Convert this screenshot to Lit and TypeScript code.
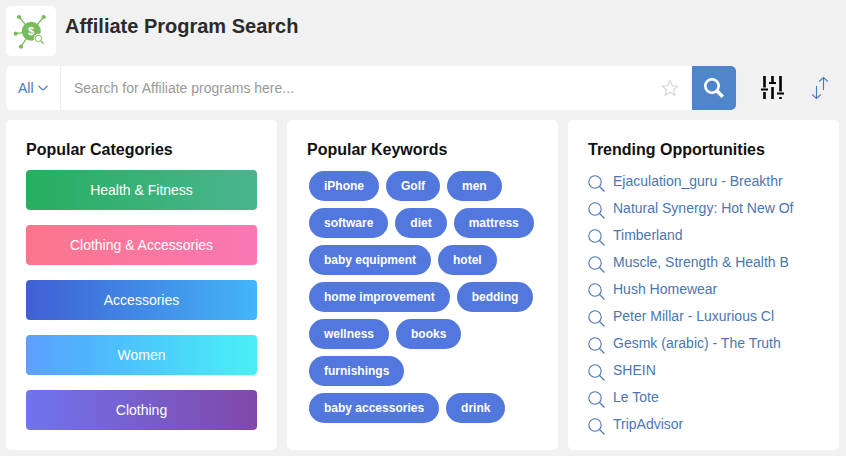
import { LitElement, html, css } from "lit";
import { customElement, property } from "lit/decorators.js";

const base = css`
  *,
  *::before,
  *::after {
    box-sizing: border-box;
  }
  button,
  input,
  select {
    font: inherit;
    border: 0;
    margin: 0;
    padding: 0;
    background: none;
  }
  button {
    cursor: pointer;
  }
  a {
    text-decoration: none;
  }
  svg {
    display: block;
  }
  ul {
    list-style: none;
    margin: 0;
    padding: 0;
  }
`;

@customElement("search-bar")
export class SearchBar extends LitElement {
  static styles = [
    base,
    css`
      :host {
        display: block;
      }
      .row {
        display: flex;
        align-items: center;
        height: 44px;
        padding-right: 10px;
      }
      .box {
        flex: 0 1 730px;
        min-width: 0;
        display: flex;
        align-items: stretch;
        height: 44px;
        border-radius: 5px;
        overflow: hidden;
        background: #fff;
      }
      .scope {
        display: grid;
        align-items: center;
        width: 55px;
        padding: 0 12px;
        border-right: 1px solid #eee;
        color: #4b7ab8;
      }
      .scope select {
        grid-area: 1 / 1;
        width: 30px;
        height: 44px;
        appearance: none;
        color: inherit;
        font-size: 14px;
        cursor: pointer;
      }
      .scope svg {
        grid-area: 1 / 1;
        justify-self: end;
        pointer-events: none;
      }
      .query {
        flex: 1;
        min-width: 0;
        padding: 0 13px;
        font-size: 14px;
        color: #333;
      }
      .query::placeholder {
        color: #999;
        opacity: 1;
      }
      .star {
        width: 44px;
        display: grid;
        place-items: center;
      }
      .go {
        width: 44px;
        display: grid;
        place-items: center;
        background: #4f86c9;
      }
      .tools {
        flex: 1 0 auto;
        display: flex;
        align-items: center;
        justify-content: space-between;
        padding-left: 24px;
      }
    `,
  ];

  render() {
    return html`
      <form class="row" @submit=${(e: Event) => e.preventDefault()}>
        <div class="box">
          <div class="scope">
            <select aria-label="Search scope">
              <option>All</option>
            </select>
            <svg width="10" height="6" viewBox="0 0 10 6" fill="none" stroke="currentColor" stroke-width="1.2">
              <path d="M.5 .7C2 2 3.5 4.8 5 4.8S8 2 9.500 .7" />
            </svg>
          </div>
          <input class="query" type="search" aria-label="Search for Affiliate programs" placeholder="Search for Affiliate programs here..." />
          <button class="star" type="button" aria-label="Favourites">
            <svg width="18" height="18" viewBox="0 0 18 18" fill="none" stroke="#d8d8d8" stroke-width="1.2" stroke-linejoin="round">
              <path d="M9 1.2 11.2 6.600 17 7l-4.500 3.700L14 16.500 9 13.300 4 16.500l1.500-5.800L1 7l5.800-.4Z" />
            </svg>
          </button>
          <button class="go" type="submit" aria-label="Search">
            <svg width="20" height="20" viewBox="0 0 20 20" fill="none" stroke="#fff">
              <circle cx="8" cy="8" r="6.700" stroke-width="2.600" />
              <path d="m12.800 12.800 6 6" stroke-width="3.600" />
            </svg>
          </button>
        </div>
        <div class="tools">
          <button type="button" aria-label="Filters">
            <svg width="24" height="24" viewBox="0 0 24 24" fill="none" stroke="#000">
              <path d="M4.500 0v11.500M4.500 16v7M12.500 0v6M12.500 11v12M20.500 0v15.500M20.500 21v2" stroke-width="2.600" />
              <path d="M1 13.500h7M9 7h7M17 17.500h7" stroke-width="2" />
            </svg>
          </button>
          <button type="button" aria-label="Sort">
            <svg width="18" height="24" viewBox="0 0 18 24" fill="none" stroke="#4b7ab8" stroke-width="1.100">
              <path d="M5.500 10v12.500M1.200 18.500l4.300 4 4.300-4M12.500 14V1.500M8.200 5.500l4.300-4 4.300 4" />
            </svg>
          </button>
        </div>
      </form>
    `;
  }
}

@customElement("panel-card")
export class PanelCard extends LitElement {
  @property() heading = "";

  static styles = [
    base,
    css`
      :host {
        display: block;
        min-width: 0;
      }
      .card {
        height: 100%;
        padding: 20px 20px 10px;
        border-radius: 5px;
        background: #fff;
      }
      .heading {
        margin: 0;
        font-size: 16px;
        line-height: 20px;
        font-weight: 700;
        color: #111;
      }
    `,
  ];

  render() {
    return html`
      <section class="card">
        <h2 class="heading">${this.heading}</h2>
        <slot></slot>
      </section>
    `;
  }
}

@customElement("app-root")
export class AppRoot extends LitElement {
  static styles = [
    base,
    css`
      :host {
        display: block;
        min-height: 100vh;
        box-sizing: border-box;
        padding: 6px 7px 6px 6px;
        background: #f1f1f1;
        font-family: "Liberation Sans", Arial, sans-serif;
        font-size: 14px;
      }
      .header {
        display: flex;
        align-items: flex-start;
        gap: 9px;
        margin-bottom: 10px;
      }
      .logo {
        width: 50px;
        height: 50px;
        border-radius: 5px;
        background: #fff;
      }
      .title {
        margin: 0;
        font-size: 20px;
        line-height: 40px;
        font-weight: 700;
        color: #2b2b2b;
      }
      .panels {
        display: grid;
        grid-template-columns: repeat(3, minmax(0, 1fr));
        gap: 10px;
        margin-top: 10px;
      }
      .categories {
        display: grid;
        gap: 15px;
        padding: 10px 0;
      }
      .category {
        display: block;
        border-radius: 4px;
        line-height: 40px;
        text-align: center;
        color: #fff;
      }
      .green {
        background: linear-gradient(90deg, #27ae60, #4ab58e);
      }
      .pink {
        background: linear-gradient(90deg, #fb758a, #fa78b4);
      }
      .blue {
        background: linear-gradient(90deg, #405fd3, #43b5f8);
      }
      .cyan {
        background: linear-gradient(90deg, #5f9ffc, #4fb4fe 25%, #48edf6 95%);
      }
      .violet {
        background: linear-gradient(90deg, #7074ee, #8048a8);
      }
      .keywords {
        display: flex;
        flex-wrap: wrap;
        gap: 7px;
        padding: 11px 0 0 2px;
      }
      .keyword {
        display: block;
        padding: 0 15px;
        border-radius: 15px;
        background: #5378dd;
        font-size: 12px;
        line-height: 30px;
        font-weight: 700;
        color: #fff;
      }
      .trends {
        padding-top: 8px;
      }
      .trend {
        display: flex;
        align-items: center;
        gap: 8px;
        line-height: 27px;
        color: #4b76b2;
      }
      .trend svg {
        margin-top: 4px;
      }
    `,
  ];

  private categories = [
    ["Health & Fitness", "green"],
    ["Clothing & Accessories", "pink"],
    ["Accessories", "blue"],
    ["Women", "cyan"],
    ["Clothing", "violet"],
  ];

  private keywords = [
    "iPhone",
    "Golf",
    "men",
    "software",
    "diet",
    "mattress",
    "baby equipment",
    "hotel",
    "home improvement",
    "bedding",
    "wellness",
    "books",
    "furnishings",
    "baby accessories",
    "drink",
  ];

  private trends = [
    "Ejaculation_guru - Breakthr",
    "Natural Synergy: Hot New Of",
    "Timberland",
    "Muscle, Strength & Health B",
    "Hush Homewear",
    "Peter Millar - Luxurious Cl",
    "Gesmk (arabic) - The Truth",
    "SHEIN",
    "Le Tote",
    "TripAdvisor",
  ];

  render() {
    return html`
      <header class="header">
        <svg class="logo" viewBox="0 0 50 50" aria-hidden="true">
          <path d="M13 11 25.300 25.300M37.700 11 25.300 25.300M9.700 27.700l15.600-2.400M15 40.700l10.300-15.400" stroke="#78bb5b" stroke-width="1.200" fill="none" />
          <g fill="#78bb5b">
            <circle cx="13" cy="11" r="2.100" />
            <circle cx="37.700" cy="11" r="2.100" />
            <circle cx="9.700" cy="27.700" r="2.100" />
            <circle cx="15" cy="40.700" r="2.100" />
            <circle cx="25.300" cy="25.300" r="9.500" />
          </g>
          <text x="25" y="29" text-anchor="middle" font-size="11" font-weight="700" fill="#fff">$</text>
          <circle cx="32.400" cy="32.400" r="4.600" fill="#fff" />
          <circle cx="32.400" cy="32.400" r="3.200" fill="#fff" stroke="#78bb5b" stroke-width="1" />
          <path d="m34.800 34.800 3 3" stroke="#78bb5b" stroke-width="1.200" />
        </svg>
        <h1 class="title">Affiliate Program Search</h1>
      </header>
      <search-bar></search-bar>
      <main class="panels">
        <panel-card heading="Popular Categories">
          <div class="categories">
            ${this.categories.map(([name, tone]) => html`<a class="category ${tone}" href="#">${name}</a>`)}
          </div>
        </panel-card>
        <panel-card heading="Popular Keywords">
          <ul class="keywords">
            ${this.keywords.map((word) => html`<li><a class="keyword" href="#">${word}</a></li>`)}
          </ul>
        </panel-card>
        <panel-card heading="Trending Opportunities">
          <ul class="trends">
            ${this.trends.map(
              (name) => html`<li>
                <a class="trend" href="#">
                  <svg width="17" height="17" viewBox="0 0 17 17" fill="none" stroke="currentColor" stroke-width="1.100">
                    <circle cx="7" cy="7" r="6.200" />
                    <path d="m11.500 11.500 5 5" />
                  </svg>
                  <span>${name}</span>
                </a>
              </li>`
            )}
          </ul>
        </panel-card>
      </main>
    `;
  }
}
